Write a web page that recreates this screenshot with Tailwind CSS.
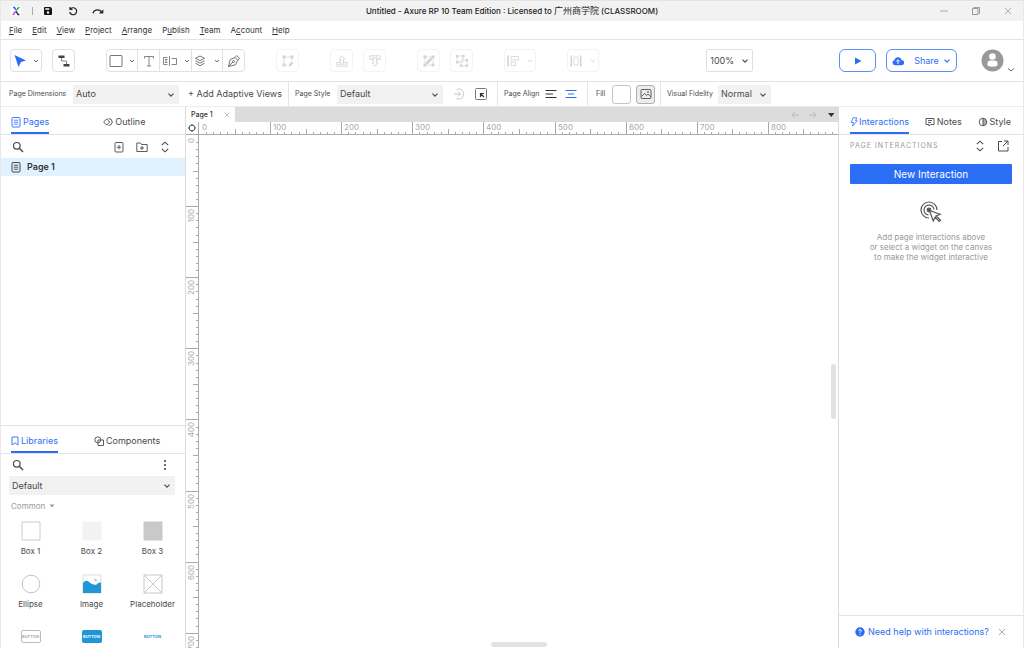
<!DOCTYPE html>
<html lang="en">
<head>
    <meta charset="UTF-8">
    <meta name="viewport" content="width=device-width, initial-scale=1.0">
    <title>Untitled - Axure RP 10 Team Edition</title>
    <script src="https://cdn.jsdelivr.net/npm/@tailwindcss/browser@4"></script>
</head>
<body class="h-screen flex flex-col overflow-hidden bg-white border-x border-[#e8e8e8] font-['Inter','Noto_Sans_CJK_SC',sans-serif] text-[9px] leading-3 text-[#4a4a4a]">

    <!-- Shared icons -->
    <svg class="hidden">
        <symbol id="chevron" viewBox="0 0 8 8"><path d="M1.5 2.700 4 5.200l2.500-2.500" fill="none" stroke="currentColor" stroke-width="1.200"/></symbol>
        <symbol id="close" viewBox="0 0 8 8"><path d="m1 1 6 6M7 1 1 7" fill="none" stroke="currentColor" stroke-width=".8"/></symbol>
        <symbol id="search" viewBox="0 0 12 12"><circle cx="4.800" cy="4.800" r="3.300" fill="none" stroke="currentColor" stroke-width="1.200"/><path d="m7.300 7.300 3.700 3.700" stroke="currentColor" stroke-width="1.500"/></symbol>
        <symbol id="updown" viewBox="0 0 10 12"><path d="M1.800 4.200 5 1.200l3.200 3M1.800 7.800 5 10.800l3.200-3" fill="none" stroke="currentColor" stroke-width="1.100"/></symbol>
        <symbol id="page" viewBox="0 0 10 12"><rect x="1" y="1.500" width="8" height="9.500" rx="1" fill="none" stroke="currentColor" stroke-width=".9"/><path d="M2.800 4.200h4.400M2.800 6.200h4.400M2.800 8.200h4.400" stroke="currentColor" stroke-width=".8"/></symbol>
    </svg>

    <!-- Title bar -->
    <header class="h-[21px] shrink-0 relative flex items-center justify-between bg-[#f2f2f2] border-t border-[#e4e4e4] pl-2.5 pr-[11px]">
        <div class="flex items-center">
            <svg class="w-2.5 h-2.5 bg-white" viewBox="0 0 10 10" fill="none" stroke-width="1.500">
                <path d="M2 1.500h1.500L5 4" stroke="#2b6ef6"/><path d="M8.300 1 5.500 4.300" stroke="#35a852"/><path d="M4.500 5.500 1.800 9" stroke="#c74ae0"/><path d="m5 5 2 3.500h1.500" stroke="#24345e"/>
            </svg>
            <span class="w-px h-2 bg-[#aaa] ml-[11px]"></span>
            <button class="ml-2.5" aria-label="Save"><svg class="w-2.5 h-2.5" viewBox="0 0 10 10"><path d="M1 2q0-1 1-1h5.500L9 2.500V8q0 1-1 1H2q-1 0-1-1z" fill="#111"/><path d="M2.300 2.200h4v1.600h-4z" fill="#f2f2f2"/><circle cx="5" cy="6.500" r="1.200" fill="#f2f2f2"/></svg></button>
            <button class="ml-[15px]" aria-label="Undo"><svg class="w-2.5 h-2.5" viewBox="0 0 10 10" fill="none" stroke="#222" stroke-width="1.200"><path d="M2 1v2.500h2.500M2.200 3.300A3.500 3.500 0 1 1 1.700 6"/></svg></button>
            <button class="ml-[14px]" aria-label="Redo"><svg class="w-3 h-2.5" viewBox="0 0 12 10"><path d="M1 7.300Q2 3.800 5.500 3.800 8 3.800 9.500 5.800" fill="none" stroke="#222" stroke-width="1.300"/><path d="M11.300 3.300v4.300H7z" fill="#222"/></svg></button>
        </div>
        <h1 class="absolute inset-x-0 text-center text-[8px] font-medium text-[#1c1c1c] pointer-events-none">Untitled - Axure RP 10 Team Edition : Licensed to <span class="text-[9px] font-normal">广州商学院</span> (CLASSROOM)</h1>
        <div class="flex items-center gap-6 text-[#999]">
            <button aria-label="Minimize"><svg class="w-2 h-2" viewBox="0 0 8 8"><path d="M0 4h8" stroke="currentColor" stroke-width=".8"/></svg></button>
            <button aria-label="Restore"><svg class="w-2 h-2" viewBox="0 0 8 8" fill="none" stroke="currentColor"><path d="M.5 1.500h5.500v6H.5z"/><path d="M1.500.5h6V7" stroke-width=".9"/></svg></button>
            <button aria-label="Close"><svg class="w-2 h-2"><use href="#close"/></svg></button>
        </div>
    </header>

    <!-- Menu -->
    <nav class="h-[19px] shrink-0 flex items-center gap-2.5 px-2 border-b border-[#e4e4e4] text-[8px] text-[#333]">
        <a href="#"><u>F</u>ile</a>
        <a href="#"><u>E</u>dit</a>
        <a href="#"><u>V</u>iew</a>
        <a href="#"><u>P</u>roject</a>
        <a href="#"><u>A</u>rrange</a>
        <a href="#">P<u>u</u>blish</a>
        <a href="#"><u>T</u>eam</a>
        <a href="#">A<u>c</u>count</a>
        <a href="#"><u>H</u>elp</a>
    </nav>

    <!-- Toolbar -->
    <div class="h-[42px] shrink-0 flex items-center pl-[9px] pr-2 border-b border-[#e4e4e4]">
        <button class="w-8 h-[23px] flex items-center justify-center gap-1.5 border border-[#e0e0e0] rounded" aria-label="Select">
            <svg class="w-3.5 h-3.5" viewBox="0 0 14 14"><path d="m1.500 1 11.500 5.500-5 1.500-2.500 5z" fill="#2b6ef6"/></svg>
            <svg class="w-1.5 h-1.5"><use href="#chevron"/></svg>
        </button>
        <button class="w-[23px] h-[23px] ml-2.5 flex items-center justify-center border border-[#e0e0e0] rounded" aria-label="Connect">
            <svg class="w-3.5 h-3.5" viewBox="0 0 14 14"><path d="M1.500 1.500h6V4h-6zM6.500 10h6v2.500h-6z" fill="#444"/><path d="M4.500 4v3h5v3" fill="none" stroke="#777" stroke-width=".9"/></svg>
        </button>
        <div class="h-[23px] ml-[31px] flex items-stretch border border-[#e0e0e0] rounded divide-x divide-[#e0e0e0]">
            <button class="w-[31px] flex items-center justify-center gap-1.5" aria-label="Rectangle">
                <svg class="w-3.5 h-3.5" viewBox="0 0 14 14"><rect x="1" y="1.500" width="12" height="11" rx=".5" fill="none" stroke="#666" stroke-width=".9"/></svg>
                <svg class="w-1.5 h-1.5"><use href="#chevron"/></svg>
            </button>
            <button class="w-[22px] flex items-center justify-center" aria-label="Text">
                <svg class="w-3 h-3" viewBox="0 0 12 12" fill="none" stroke="#777" stroke-width=".9"><path d="M1.500 3.500v-2h9v2M6 1.500v9.500M4 11h4"/></svg>
            </button>
            <button class="w-8 flex items-center justify-center gap-1.5" aria-label="Form controls">
                <svg class="w-4 h-3" viewBox="0 0 16 12" fill="none" stroke="#777" stroke-width=".9"><path d="M5.500 2.500h-4v7h4M3 4.500h2.500M4 4.500v3M3 7.500h2.500M7.500 1v10M9.500 3.500h5v6h-5"/></svg>
                <svg class="w-1.5 h-1.5"><use href="#chevron"/></svg>
            </button>
            <button class="w-[31px] flex items-center justify-center gap-2" aria-label="Dynamic panel">
                <svg class="w-3 h-3" viewBox="0 0 12 12" fill="none" stroke="#666" stroke-width=".9"><path d="m6 1 4.500 2.300L6 5.600 1.500 3.300zM1.500 5.800 6 8.200l4.500-2.400M1.500 8.200 6 10.800l4.500-2.600"/></svg>
                <svg class="w-1.5 h-1.5"><use href="#chevron"/></svg>
            </button>
            <button class="w-[21px] flex items-center justify-center" aria-label="Pen">
                <svg class="w-3.5 h-3.5" viewBox="0 0 14 14" fill="none" stroke="#666" stroke-width=".9"><path d="m1.500 12.500 1.700-7L8 3.500l2.700 2.700-2.200 4.600zM8 3.500l1.700-2 3 3-2 1.700M1.500 12.500 6 8"/><circle cx="6.500" cy="7.500" r="1"/></svg>
            </button>
        </div>
        <button class="w-[23px] h-[23px] ml-[31px] flex items-center justify-center border border-[#f3f3f3] rounded text-[#d4d4d4]" aria-label="Edit points" disabled>
            <svg class="w-3 h-3" viewBox="0 0 12 12"><path d="M2 2h8v3M2 2v8h3" fill="none" stroke="currentColor" stroke-width=".7"/><path d="M.5.5h3v3h-3zM8.500.5h3v3h-3zM.5 8.500h3v3h-3zM6.500 11.500 7 9l3-2.500 1.500 1.500L9 11z" fill="currentColor"/></svg>
        </button>
        <button class="w-[23px] h-[23px] ml-[31px] flex items-center justify-center border border-[#f3f3f3] rounded text-[#d4d4d4]" aria-label="Bring to front" disabled>
            <svg class="w-3 h-3" viewBox="0 0 12 12" fill="none" stroke="currentColor" stroke-width=".9"><path d="M4.500 7.500H.8v3.700h10.400V7.500H7.500M2.500 9.200h7M4.500 8.500V4H3l3-3.200L9 4H7.500v4.500"/></svg>
        </button>
        <button class="w-[23px] h-[23px] ml-2.5 flex items-center justify-center border border-[#f3f3f3] rounded text-[#d4d4d4]" aria-label="Send to back" disabled>
            <svg class="w-3 h-3" viewBox="0 0 12 12" fill="none" stroke="currentColor" stroke-width=".9"><path d="M4.500 4.500H.8V.8h10.400v3.700H7.500M2.500 2.800h7M4.500 3.500V8H3l3 3.200L9 8H7.500V3.500"/></svg>
        </button>
        <button class="w-[23px] h-[23px] ml-[31px] flex items-center justify-center border border-[#f3f3f3] rounded text-[#d4d4d4]" aria-label="Group" disabled>
            <svg class="w-3 h-3" viewBox="0 0 12 12"><path d="M2 2h8v8H2z" fill="none" stroke="currentColor" stroke-width=".6"/><path d="M.5.5h3v3h-3zM8.500.5h3v3h-3zM.5 8.500h3v3h-3zM8.500 8.500h3v3h-3zM3 7l4-4h2v2L5 9H3z" fill="currentColor"/></svg>
        </button>
        <button class="w-[23px] h-[23px] ml-2.5 flex items-center justify-center border border-[#f3f3f3] rounded text-[#d4d4d4]" aria-label="Ungroup" disabled>
            <svg class="w-3.5 h-3.5" viewBox="0 0 14 14"><path d="M2 2h6v6H2zM6 6h6v6H6z" fill="none" stroke="currentColor" stroke-width=".6"/><path d="M1 1h2.500v2.500H1zM7 1h2.500v2.500H7zM1 7h2.500v2.500H1zM10.500 5H13v2.500h-2.500zM5 10.500h2.500V13H5zM10.500 10.500H13V13h-2.500z" fill="currentColor"/></svg>
        </button>
        <button class="w-8 h-[23px] ml-[31px] flex items-center justify-center gap-2 border border-[#f3f3f3] rounded text-[#d4d4d4]" aria-label="Align" disabled>
            <svg class="w-3 h-3" viewBox="0 0 12 12" fill="none" stroke="currentColor"><path d="M1 .5v11" stroke-width="1.600"/><path d="M4 1.500h7.500V5H4zM4 7h4.500v3.500H4z" stroke-width=".8"/></svg>
            <svg class="w-1.5 h-1.5"><use href="#chevron"/></svg>
        </button>
        <button class="w-8 h-[23px] ml-[31px] flex items-center justify-center gap-2 border border-[#f3f3f3] rounded text-[#d4d4d4]" aria-label="Distribute" disabled>
            <svg class="w-3 h-3" viewBox="0 0 12 12" fill="none" stroke="currentColor"><path d="M1.300.5v11M10.700.5v11" stroke-width="1.600"/><path d="M4 2h4v8H4z" stroke-width=".8"/></svg>
            <svg class="w-1.5 h-1.5"><use href="#chevron"/></svg>
        </button>
        <div class="grow-[5]"></div>
        <div class="relative">
            <select class="appearance-none w-[47px] h-[23px] pl-[3px] border border-[#e0e0e0] rounded-[2px]" aria-label="Zoom"><option>100%</option></select>
            <svg class="absolute right-1 top-2 w-2 h-2 pointer-events-none"><use href="#chevron"/></svg>
        </div>
        <div class="grow-[4]"></div>
        <button class="w-[37px] h-[23px] flex items-center justify-center border border-[#5b8ff9] rounded-md" aria-label="Preview">
            <svg class="w-2 h-2" viewBox="0 0 8 8"><path d="M1 .5 7.500 4 1 7.500z" fill="#2b6ef6"/></svg>
        </button>
        <button class="w-[71px] h-[23px] ml-2.5 flex items-center justify-center border border-[#5b8ff9] rounded-md text-[#2b6ef6]">
            <svg class="w-3 h-3" viewBox="0 0 12 12"><path d="M3 10.300a2.700 2.700 0 0 1-.5-5.300 3.600 3.600 0 0 1 7-.1 2.700 2.700 0 0 1-.2 5.400z" fill="#2b6ef6"/><path d="M6 9V5M4.300 6.500 6 4.800l1.700 1.700" fill="none" stroke="#fff"/></svg>
            <span class="ml-2.5">Share</span>
            <svg class="w-2 h-2 ml-1"><use href="#chevron"/></svg>
        </button>
        <button class="ml-6 flex items-end gap-[3px]" aria-label="Account">
            <svg class="w-[23px] h-[23px]" viewBox="0 0 23 23"><circle cx="11.500" cy="11.500" r="11" fill="#999"/><circle cx="11.500" cy="7.500" r="3.300" fill="#fff"/><path d="M6.500 16.500v-2q0-3 3-3h4q3 0 3 3v2q-2.500 1.200-5 1.200t-5-1.200z" fill="#fff"/></svg>
            <svg class="w-2 h-2" viewBox="0 0 8 8"><path d="M1 4.500 4 7l3-2.500" fill="none" stroke="#555" stroke-width=".9"/></svg>
        </button>
    </div>

    <!-- Page properties -->
    <div class="h-[25px] shrink-0 flex items-center border-b border-[#ececec] text-[7px] whitespace-nowrap">
        <label for="dimensions" class="pl-2 w-[72px]">Page Dimensions</label>
        <div class="relative">
            <select id="dimensions" class="appearance-none block w-[106px] h-[19px] pl-[3px] bg-[#f2f2f2] text-[9px]"><option>Auto</option></select>
            <svg class="absolute right-1 top-1.5 w-2 h-2 pointer-events-none"><use href="#chevron"/></svg>
        </div>
        <button class="ml-[9px] w-[100px] text-left text-[9px]">+ Add Adaptive Views</button>
        <div class="h-full flex items-center border-l border-[#e4e4e4] pl-1.5">
            <label for="style" class="w-[42px]">Page Style</label>
            <div class="relative">
                <select id="style" class="appearance-none block w-[106px] h-[19px] pl-[3px] bg-[#f2f2f2] text-[9px]"><option>Default</option></select>
                <svg class="absolute right-1 top-1.5 w-2 h-2 pointer-events-none"><use href="#chevron"/></svg>
            </div>
            <button class="ml-2.5" aria-label="Update style" disabled><svg class="w-3 h-3" viewBox="0 0 12 12" fill="none" stroke="#c8c8c8"><path d="M3.500 1.500a5 5 0 1 1 0 9M1 6h6.500M5 3.500 7.500 6 5 8.500"/></svg></button>
            <button class="ml-2.5 mr-2.5" aria-label="Manage styles"><svg class="w-3 h-3" viewBox="0 0 12 12" fill="none" stroke="#777"><rect x=".5" y=".5" width="11" height="11" rx="1"/><path d="M5.500 9V5.500H9M5.500 5.500 9 9" stroke="#333" stroke-width="1.200"/></svg></button>
        </div>
        <div class="h-full flex items-center border-l border-[#e4e4e4] pl-1.5">
            <span class="w-[41px]">Page Align</span>
            <button aria-label="Align left"><svg class="w-3 h-3" viewBox="0 0 12 12" stroke="#333" stroke-width="1.200"><path d="M.5 2.500h11M.5 6H8M.5 9.500h11"/></svg></button>
            <button class="ml-2 mr-2.5" aria-label="Align center"><svg class="w-3 h-3" viewBox="0 0 12 12" stroke="#2b6ef6" stroke-width="1.200"><path d="M.5 2.500h11M3 6h6M.5 9.500h11"/></svg></button>
        </div>
        <div class="h-full flex items-center border-l border-[#e4e4e4] pl-2">
            <span class="w-4">Fill</span>
            <button class="w-[19px] h-[19px] border border-[#c4c4c4] rounded-[3px] bg-white" aria-label="Fill color"></button>
            <button class="w-[19px] h-[19px] ml-[5px] mr-[5px] flex items-center justify-center border border-[#b0b0b0] rounded-[3px] bg-[#ececec]" aria-label="Fill image"><svg class="w-3 h-3" viewBox="0 0 12 12" fill="none" stroke="#555" stroke-width=".9"><rect x="1" y="1.500" width="10" height="9" rx="1"/><path d="m1.500 8.500 3-3 2 2 1.500-1.500 3 3"/><circle cx="8" cy="4" r=".5"/></svg></button>
        </div>
        <div class="h-full flex items-center border-l border-[#e4e4e4] pl-1.5">
            <label for="fidelity" class="w-[51px]">Visual Fidelity</label>
            <div class="relative">
                <select id="fidelity" class="appearance-none block w-[53px] h-[19px] pl-[3px] bg-[#f2f2f2] text-[9px]"><option>Normal</option></select>
                <svg class="absolute right-1 top-1.5 w-2 h-2 pointer-events-none"><use href="#chevron"/></svg>
            </div>
        </div>
    </div>

    <main class="flex-1 min-h-0 grid grid-cols-[185px_minmax(0,1fr)_185px]">

        <!-- Left panels -->
        <aside class="min-h-0 flex flex-col border-r border-[#dcdcdc]">
            <section class="flex-1 min-h-0">
                <div class="h-7 flex pl-2.5 border-b border-[#e4e4e4]">
                    <button class="flex items-center gap-0.5 pt-1 border-b-2 border-[#2b6ef6] text-[#2b6ef6]"><svg class="w-2.5 h-3"><use href="#page"/></svg>Pages</button>
                    <button class="ml-[54px] pt-0.5 flex items-center gap-0.5"><svg class="w-2.5 h-2.5" viewBox="0 0 10 10" fill="none" stroke="currentColor" stroke-width=".9"><path d="M.7 5 3.700 1.800 6.700 5 3.700 8.200zM5.500 1.500q3.800.5 3.800 3.500T5.500 8.500"/></svg>Outline</button>
                </div>
                <div class="h-[23px] flex items-center pl-[11px] pr-[15px]">
                    <button class="mr-auto" aria-label="Search pages"><svg class="w-3 h-3"><use href="#search"/></svg></button>
                    <button aria-label="Add page"><svg class="w-2.5 h-3" viewBox="0 0 10 12" fill="none" stroke="currentColor" stroke-width=".9"><rect x="1" y="1.500" width="8" height="9.500" rx="1"/><path d="M5 4v4.400M2.800 6.200h4.400"/></svg></button>
                    <button class="ml-3" aria-label="Add folder"><svg class="w-3 h-3" viewBox="0 0 12 12" fill="none" stroke="currentColor" stroke-width=".9"><path d="M.8 2h3.700l1 1.500h5.700v7H.8zM6 5v4M4 7h4"/></svg></button>
                    <button class="ml-3" aria-label="Expand all"><svg class="w-2.5 h-3"><use href="#updown"/></svg></button>
                </div>
                <div class="h-[18px] flex items-center gap-1.5 pl-2.5 bg-[#dff2fe] font-semibold text-[#333]">
                    <svg class="w-2.5 h-3"><use href="#page"/></svg>Page 1
                </div>
            </section>
            <section class="h-[223px] overflow-hidden border-t border-[#e4e4e4]">
                <div class="h-7 flex pl-2.5 border-b border-[#e4e4e4]">
                    <button class="flex items-center gap-0.5 pt-1 border-b-2 border-[#2b6ef6] text-[#2b6ef6]"><svg class="w-2 h-2.5" viewBox="0 0 8 10" fill="none" stroke="currentColor" stroke-width=".9"><path d="M1 1h6v8L4 6.800 1 9z"/></svg>Libraries</button>
                    <button class="ml-9 pt-0.5 flex items-center gap-0.5"><svg class="w-2.5 h-2.5" viewBox="0 0 10 10" fill="none" stroke="currentColor" stroke-width=".9"><circle cx="3.800" cy="3.800" r="3"/><path d="M4 4h5.500v5.500H4z"/></svg>Components</button>
                </div>
                <div class="h-[22px] flex items-center justify-between pl-[11px] pr-[15px]">
                    <button aria-label="Search libraries"><svg class="w-3 h-3"><use href="#search"/></svg></button>
                    <button aria-label="Library options"><svg class="w-2.5 h-3" viewBox="0 0 10 12" fill="currentColor"><circle cx="5" cy="2" r="1.100"/><circle cx="5" cy="6" r="1.100"/><circle cx="5" cy="10" r="1.100"/></svg></button>
                </div>
                <div class="relative mx-2 mr-2.5">
                    <select class="appearance-none block w-full h-[19px] pl-[3px] bg-[#f2f2f2]" aria-label="Library"><option>Default</option></select>
                    <svg class="absolute right-1 top-1.5 w-2 h-2 pointer-events-none"><use href="#chevron"/></svg>
                </div>
                <button class="h-5 pt-0.5 pl-2.5 flex items-center gap-1 text-[8px] text-[#999]">Common <svg class="w-1.5 h-1" viewBox="0 0 6 4"><path d="M.5.5h5L3 3.500z" fill="currentColor"/></svg></button>
                <ul class="grid grid-cols-[59px_63px_59px] text-center text-[8px]">
                    <li class="h-[53px] pt-1.5 flex flex-col items-center gap-1"><svg class="w-5 h-5 shrink-0" viewBox="0 0 20 20"><path d="M1 1h18v18H1z" fill="#fff" stroke="#ccc"/></svg>Box 1</li>
                    <li class="h-[53px] pt-1.5 flex flex-col items-center gap-1"><svg class="w-5 h-5 shrink-0" viewBox="0 0 20 20"><path d="M.5.5h19v19H.5z" fill="#f2f2f2"/></svg>Box 2</li>
                    <li class="h-[53px] pt-1.5 flex flex-col items-center gap-1"><svg class="w-5 h-5 shrink-0" viewBox="0 0 20 20"><path d="M.5.5h19v19H.5z" fill="#c9c9c9"/></svg>Box 3</li>
                    <li class="h-[53px] pt-1.5 flex flex-col items-center gap-1"><svg class="w-5 h-5 shrink-0" viewBox="0 0 20 20"><circle cx="10" cy="10" r="8.800" fill="#fff" stroke="#c4c4c4"/></svg>Ellipse</li>
                    <li class="h-[53px] pt-1.5 flex flex-col items-center gap-1"><svg class="w-5 h-5 shrink-0" viewBox="0 0 20 20"><path d="M1 1h18v18H1z" fill="#fff" stroke="#ddd"/><circle cx="13.500" cy="6" r="1.500" fill="#ccc"/><path d="M1 9q3-4 6-1t7 3q2-3 5-2.500V19H1z" fill="#2196d6"/></svg>Image</li>
                    <li class="h-[53px] pt-1.5 flex flex-col items-center gap-1"><svg class="w-5 h-5 shrink-0" viewBox="0 0 20 20"><path d="M1 1h18v18H1zM1 1l18 18M19 1 1 19" fill="none" stroke="#c8c8c8"/></svg>Placeholder</li>
                    <li class="pt-[9px] flex justify-center"><span class="w-5 h-[13px] border border-[#bbb] rounded-[2px] text-[4px] leading-[11px] font-bold text-[#aaa]">BUTTON</span></li>
                    <li class="pt-[9px] flex justify-center"><span class="w-5 h-[13px] rounded-[2px] bg-[#2196d6] text-[4px] leading-[13px] font-bold text-white">BUTTON</span></li>
                    <li class="pt-[9px] flex justify-center"><span class="w-5 h-[13px] text-[4px] leading-[13px] font-bold text-[#2196d6]">BUTTON</span></li>
                </ul>
            </section>
        </aside>

        <!-- Canvas -->
        <section class="relative min-h-0 flex flex-col bg-white">
            <div class="h-[15px] shrink-0 flex items-center bg-[#dcdcdc]">
                <div class="h-full w-[49px] flex items-center justify-between pl-[5px] pr-[5px] bg-white text-[7px] font-medium text-[#333] whitespace-nowrap">Page 1<button aria-label="Close page" class="text-[#999]"><svg class="w-1.5 h-1.5"><use href="#close"/></svg></button></div>
                <div class="ml-auto mr-[3px] flex items-center gap-2.5">
                    <button aria-label="Previous"><svg class="w-2 h-2" viewBox="0 0 8 8" fill="none" stroke="#b8b8b8"><path d="M8 4H1M4 1 1 4l3 3"/></svg></button>
                    <button aria-label="Next"><svg class="w-2 h-2" viewBox="0 0 8 8" fill="none" stroke="#b8b8b8"><path d="M0 4h7M4 1l3 3-3 3"/></svg></button>
                    <button aria-label="All tabs"><svg class="w-2 h-2" viewBox="0 0 8 8"><path d="M1 2h6.500L4.200 6z" fill="#333"/></svg></button>
                </div>
            </div>
            <div class="h-[13px] shrink-0 flex border-b border-[#aaa]">
                <div class="w-[13px] flex items-center justify-center border-r border-[#aaa]">
                    <svg class="w-2 h-2" viewBox="0 0 8 8" fill="none" stroke="#555"><circle cx="4" cy="4" r="2.900"/><path d="M4 0v2M4 6v2M0 4h2M6 4h2"/></svg>
                </div>
                <div class="flex-1 min-w-0"><svg id="rulerX" class="w-full h-full text-[8px]" fill="#aaa"></svg></div>
            </div>
            <div class="flex-1 min-h-0 w-[13px] border-r border-[#aaa]"><svg id="rulerY" class="w-full h-full text-[8px]" fill="#aaa"></svg></div>
            <div class="absolute right-[2px] top-[257px] w-[5px] h-[55px] rounded-sm bg-[#e2e2e2]"></div>
            <div class="absolute left-[305px] bottom-px w-14 h-[5px] rounded-sm bg-[#e2e2e2]"></div>
        </section>

        <!-- Interactions -->
        <aside class="min-h-0 flex flex-col border-l border-[#dcdcdc]">
            <div class="h-7 shrink-0 flex justify-between pl-[11px] pr-3 border-b border-[#e4e4e4]">
                <button class="flex items-center gap-px pt-1 border-b-2 border-[#2b6ef6] text-[#2b6ef6]"><svg class="w-2 h-2.5" viewBox="0 0 8 10" fill="none" stroke="currentColor" stroke-width=".8"><path d="M3 .8h3.800L5.500 3.800h1.800L2.500 9.200l1-3.700H1.200z"/></svg>Interactions</button>
                <button class="flex items-center gap-0.5 pt-0.5"><svg class="w-2.5 h-2.5" viewBox="0 0 10 10" fill="none" stroke="currentColor" stroke-width=".9"><path d="M1 1.500h8v6H5.500L4 9V7.500H1zM3 3.500h4M3 5.500h3"/></svg>Notes</button>
                <button class="flex items-center gap-0.5 pt-0.5"><svg class="w-2.5 h-2.5" viewBox="0 0 10 10" fill="none" stroke="currentColor" stroke-width=".9"><circle cx="5" cy="5" r="3.800"/><path d="M5 1v8M5 3h3M5 5h4M5 7h3"/></svg>Style</button>
            </div>
            <div class="h-[22px] shrink-0 flex items-center pl-[11px] pr-3.5">
                <h2 class="mr-auto text-[7px] tracking-[1px] text-[#999]">PAGE INTERACTIONS</h2>
                <button aria-label="Expand all"><svg class="w-2.5 h-3"><use href="#updown"/></svg></button>
                <button class="ml-3" aria-label="Open in window"><svg class="w-3 h-3" viewBox="0 0 12 12" fill="none" stroke="currentColor"><path d="M5 1.500H1.500V11H11V7M7 1h4v4M11 1 6 6"/></svg></button>
            </div>
            <button class="h-5 shrink-0 mx-[11px] mt-[7px] rounded-[1px] bg-[#2b6ef6] text-[10px] text-white">New Interaction</button>
            <svg class="w-6 h-6 shrink-0 mx-auto mt-4" viewBox="0 0 24 24" fill="none" stroke="#555" stroke-width="1.200"><path d="M10 18A8 8 0 1 1 18 10"/><path d="M9.500 15A5 5 0 1 1 15 9.500"/><circle cx="10" cy="10" r="1.800" fill="#555"/><path d="m10.500 10.500 3.700 10.500 2-4 4 4.500 1.300-1.300-4.300-4.200 4-1.800z" fill="#fff"/></svg>
            <p class="mt-2 text-center text-[8px] leading-[10px] text-[#999]">Add page interactions above<br>or select a widget on the canvas<br>to make the widget interactive</p>
            <div class="h-[33px] shrink-0 mt-auto flex items-center pl-4 pr-[17px] border-t border-[#e4e4e4]">
                <a href="#" class="mr-auto flex items-center gap-[3px] text-[#2b6ef6]"><svg class="w-2.5 h-2.5" viewBox="0 0 10 10"><circle cx="5" cy="5" r="4.700" fill="currentColor"/><path d="M3.700 4q0-1.500 1.300-1.500T6.300 4Q6.300 4.800 5 5.300V6M5 7v1" fill="none" stroke="#fff" stroke-width=".9"/></svg>Need help with interactions?</a>
                <button aria-label="Dismiss" class="text-[#999]"><svg class="w-2 h-2"><use href="#close"/></svg></button>
            </div>
        </aside>
    </main>

    <script>
        // Ruler ticks: one every 10 units, a taller one at 50, a full one with its label at 100
        const SCALE = 0.711;

        function drawRuler(svg, size, vertical) {
            let out = '';
            for (let n = 0; n * SCALE < size; n += 10) {
                const pos = Math.round(n * SCALE);
                const len = n % 100 === 0 ? 13 : n % 50 === 0 ? 5 : 2;
                if (n > 0) {
                    out += vertical
                        ? `<rect x="${12 - len}" y="${pos}" width="${len}" height="1"/>`
                        : `<rect x="${pos}" y="${12 - len}" width="1" height="${len}"/>`;
                }
                if (n % 100 === 0) {
                    out += vertical
                        ? `<text transform="translate(8 ${pos + 3}) rotate(-90)" text-anchor="end">${n}</text>`
                        : `<text x="${pos + 3}" y="8">${n}</text>`;
                }
            }
            svg.innerHTML = out;
        }

        function drawRulers() {
            const rulerX = document.getElementById('rulerX');
            const rulerY = document.getElementById('rulerY');
            drawRuler(rulerX, rulerX.parentElement.clientWidth, false);
            drawRuler(rulerY, rulerY.parentElement.clientHeight, true);
        }

        drawRulers();
        window.addEventListener('resize', drawRulers);
    </script>
</body>
</html>
